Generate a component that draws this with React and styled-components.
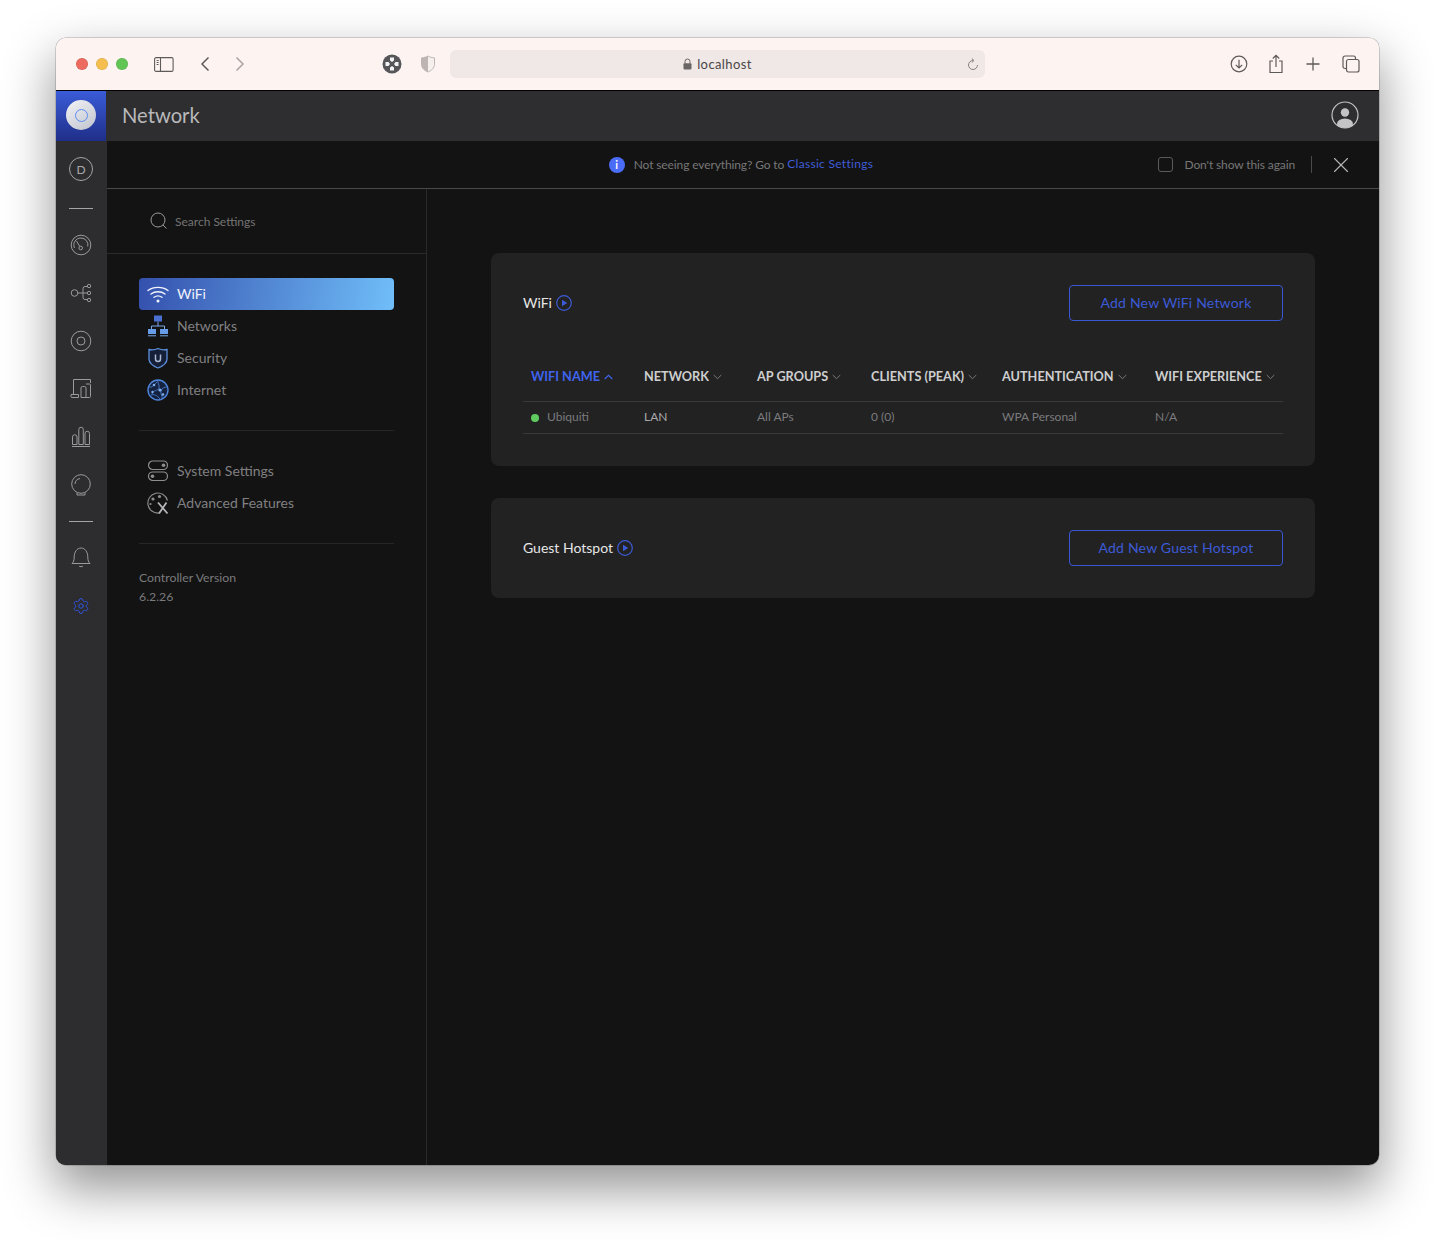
import React from "react";
import styled, { createGlobalStyle } from "styled-components";
import { Settings, X } from "lucide-react";

const Global = createGlobalStyle`
  html, body { margin: 0; padding: 0; background: #fff; height: 1240px; overflow: hidden; }
  body { font-family: Lato, "Liberation Sans", sans-serif; -webkit-font-smoothing: antialiased; }
  * { box-sizing: border-box; }
`;

const Page = styled.div`
  height: 1240px;
  padding: 38px 56px 75px;
`;
const Win = styled.div`
  height: 1127px;
  border-radius: 10px;
  overflow: hidden;
  display: flex;
  flex-direction: column;
  box-shadow: 0 0 0 0.5px rgba(0,0,0,.3), 0 22px 50px 2px rgba(0,0,0,.42);
`;
const TitleBar = styled.div`
  height: 53px;
  flex: none;
  background: #fdf3f1;
  border-bottom: 1px solid #000;
  display: flex;
  align-items: center;
  padding-left: 20px;
`;
const Lights = styled.div`
  display: flex;
  gap: 8px;
  width: 52px;
`;
const Light = styled.span`
  width: 12px;
  height: 12px;
  border-radius: 50%;
  background: ${p => p.$c};
  box-shadow: inset 0 0 0 0.5px rgba(0,0,0,.12);
`;
const Tool = styled.div`
  width: 20px;
  height: 22px;
  margin-left: ${p => p.$ml}px;
  flex: none;
  display: flex;
  align-items: center;
  justify-content: center;
  color: ${p => p.$c || "#5f5a5a"};
`;
const UrlBar = styled.div`
  width: 535px;
  height: 28px;
  margin-left: 12px;
  flex: none;
  border-radius: 6px;
  background: #efe8e6;
  display: flex;
  align-items: center;
  justify-content: center;
  position: relative;
  gap: 5px;
  font-size: 13px;
  color: #4a4646;
  letter-spacing: .4px;
`;
const Reload = styled.span`
  position: absolute;
  right: 6px;
  top: 8px;
  display: flex;
`;
const Header = styled.div`
  height: 50px;
  flex: none;
  background: #2e2e30;
  display: flex;
  align-items: center;
  justify-content: space-between;
  padding-right: 20px;
`;
const Brand = styled.div`
  display: flex;
  align-items: center;
`;
const LogoBox = styled.div`
  width: 50px;
  height: 50px;
  padding-bottom: 2px;
  background: linear-gradient(180deg,#3a5cd8,#1f2e88);
  display: flex;
  align-items: center;
  justify-content: center;
`;
const Disc = styled.div`
  width: 30px;
  height: 30px;
  border-radius: 50%;
  background: linear-gradient(145deg,#f2f3f6,#bfc3cc);
  display: flex;
  align-items: center;
  justify-content: center;
`;
const Ring = styled.div`
  width: 13px;
  height: 13px;
  border-radius: 50%;
  border: 1.5px solid #5c8cf5;
`;
const AppName = styled.div`
  margin-left: 16px;
  padding-bottom: 3px;
  font-size: 20.2px;
  color: #b9b9bb;
`;
const Avatar = styled.div`
  display: flex;
  padding-bottom: 2px;
`;
const Body = styled.div`
  flex: 1;
  min-height: 0;
  display: flex;
  background: #131313;
`;
const Rail = styled.nav`
  width: 51px;
  flex: none;
  background: #2d2d2f;
  padding: 4px 1px 0 0;
  display: flex;
  flex-direction: column;
`;
const RailItem = styled.div`
  height: 48px;
  display: flex;
  align-items: center;
  justify-content: center;
  color: ${p => p.$c || "#9a9a9c"};
`;
const DBadge = styled.div`
  width: 24px;
  height: 24px;
  border: 1px solid #a5a5a7;
  border-radius: 50%;
  font-size: 12px;
  color: #a8a8aa;
  display: flex;
  align-items: center;
  justify-content: center;
`;
const RailRule = styled.div`
  height: ${p => p.$h}px;
  padding-top: ${p => p.$pt || 0}px;
  display: flex;
  align-items: center;
  justify-content: center;
  &::before {
    content: "";
    width: 24px;
    height: 1px;
    background: #a5a5a7;
  }
`;
const Main = styled.div`
  flex: 1;
  min-width: 0;
  display: flex;
  flex-direction: column;
`;
const Banner = styled.div`
  height: 48px;
  flex: none;
  border-bottom: 1px solid #4a4a4c;
  display: grid;
  grid-template-columns: 1fr auto 1fr;
  align-items: center;
  padding: 0 25px 0 21px;
  font-size: 12px;
  letter-spacing: -.12px;
  color: #777;
`;
const Notice = styled.div`
  grid-column: 2;
  display: flex;
  align-items: center;
`;
const InfoDot = styled.span`
  width: 16px;
  height: 16px;
  border-radius: 50%;
  background: #4a6cf7;
  color: #fff;
  font-size: 11px;
  font-weight: 700;
  letter-spacing: 0;
  display: flex;
  align-items: center;
  justify-content: center;
  margin-right: 9px;
`;
const BannerText = styled.span`
  padding-bottom: 1px;
`;
const BLink = styled.span`
  color: #3f5dd8;
  margin-left: 3px;
  padding-bottom: 3px;
  letter-spacing: .3px;
`;
const BannerRight = styled.div`
  grid-column: 3;
  justify-self: end;
  display: flex;
  align-items: center;
`;
const Check = styled.span`
  width: 15px;
  height: 15px;
  border: 1px solid #5a5a5c;
  border-radius: 3px;
  margin-right: 12px;
`;
const VRule = styled.span`
  width: 1px;
  height: 17px;
  background: #4a4a4c;
  margin: 0 16px;
`;
const CloseBtn = styled.span`
  display: flex;
  color: #b5b5b7;
`;
const Split = styled.div`
  flex: 1;
  min-height: 0;
  display: flex;
`;
const SidePanel = styled.aside`
  width: 320px;
  flex: none;
  border-right: 1px solid #2a2a2b;
`;
const SearchRow = styled.div`
  height: 65px;
  border-bottom: 1px solid #2a2a2b;
  padding: 0 0 1px 43px;
  display: flex;
  align-items: center;
  gap: 7px;
  font-size: 12px;
  color: #737375;
`;
const SearchText = styled.span`
  padding-top: 2px;
`;
const NavArea = styled.div`
  padding: 24px 32px;
`;
const NavItem = styled.div`
  height: 32px;
  border-radius: 4px;
  display: flex;
  align-items: center;
  gap: 7px;
  padding-left: 7px;
  font-size: 14px;
  color: ${p => (p.$active ? "#eef2fb" : "#808082")};
  background: ${p => (p.$active ? "linear-gradient(100deg,#3450ad,#70bef9)" : "transparent")};
`;
const NavLabel = styled.span`
  padding-bottom: 2px;
`;
const NavRule = styled.div`
  height: 1px;
  background: #262627;
  margin: ${p => p.$m};
`;
const Version = styled.div`
  font-size: 12.3px;
  line-height: 19px;
  color: #7a7a7c;
  margin-top: 24px;
`;
const Content = styled.main`
  flex: 1;
  padding: 64px;
  display: flex;
  flex-direction: column;
  gap: 32px;
`;
const Card = styled.section`
  background: #222223;
  border-radius: 8px;
  padding: 32px;
`;
const CardHead = styled.div`
  display: flex;
  align-items: center;
  justify-content: space-between;
`;
const CardTitle = styled.div`
  display: flex;
  align-items: center;
  gap: 4px;
  font-size: 14px;
  color: #e6e6e6;
`;
const TitleText = styled.span`
  padding-bottom: 2px;
`;
const OutlineBtn = styled.div`
  width: 214px;
  height: 36px;
  padding-bottom: 2px;
  border: 1px solid #3a58d4;
  border-radius: 4px;
  color: #3c5ad6;
  font-size: 14px;
  letter-spacing: .2px;
  display: flex;
  align-items: center;
  justify-content: center;
`;
const Row = styled.div`
  display: grid;
  grid-template-columns: 113px 113px 114px 131px 153px 136px;
  height: ${p => p.$h}px;
  align-items: center;
  border-bottom: 1px solid #39393a;
  margin-top: ${p => p.$mt || 0}px;
`;
const HeadCell = styled.div`
  padding: 0 0 2px 8px;
  font-size: 12.7px;
  font-weight: 700;
  color: ${p => (p.$active ? "#3f64ee" : "#cfcfcf")};
  display: flex;
  align-items: center;
  gap: 4px;
  white-space: nowrap;
`;
const Caret = styled.span`
  display: flex;
  padding-top: 2px;
`;
const Cell = styled.div`
  padding: 0 0 2px 8px;
  font-size: 12px;
  color: ${p => (p.$strong ? "#a9a9ab" : "#7b7b7d")};
  display: flex;
  align-items: center;
  gap: 8px;
`;
const Dot = styled.span`
  width: 8px;
  height: 8px;
  margin-top: 2px;
  border-radius: 50%;
  background: #5fcb5f;
`;

const S = { fill: "none", stroke: "currentColor", strokeWidth: 1 };

const IconSidebar = () => (
  <svg width="20" height="15" viewBox="0 0 20 15" {...S} strokeWidth="1.1">
    <rect x=".6" y=".6" width="18.5" height="13.8" rx="1.5" />
    <path d="M6.5.6v13.8M2.6 3.5h2M2.6 5.5h2M2.6 7.5h2" />
  </svg>
);
const Chev = ({ d }) => (
  <svg width="12" height="16" viewBox="0 0 12 16" fill="none" stroke="currentColor" strokeWidth="1.5">
    <path d={d} />
  </svg>
);
const IconGhost = () => (
  <svg width="20" height="20" viewBox="0 0 20 20">
    <circle cx="10" cy="10" r="9.5" fill="#565658" />
    <path d="M8 3.5h4v3L10 8 8 6.5zM8 16.5h4v-3L10 12l-2 1.5zM3.5 8h3L8 10l-1.5 2h-3zM16.5 8h-3L12 10l1.5 2h3z" fill="#f4f4f4" />
  </svg>
);
const IconShield = () => (
  <svg width="16" height="18" viewBox="0 0 16 18">
    <path d="M8 1c2 1.200 4 1.700 6.500 1.900v6.300C14.500 13 11.500 15.500 8 17c-3.500-1.500-6.500-4-6.500-7.800V2.900C4 2.700 6 2.200 8 1z" fill="#f5efee" stroke="#bdb5b4" />
    <path d="M8 1c-2 1.200-4 1.700-6.500 1.900v6.300C1.500 13 4.500 15.500 8 17z" fill="#bdb5b4" />
  </svg>
);
const IconLock = () => (
  <svg width="9" height="12" viewBox="0 0 9 12">
    <path d="M2 5.500V3.500a2.500 2.500 0 0 1 5 0v2" fill="none" stroke="#6a6666" strokeWidth="1" />
    <rect x=".5" y="5.200" width="8" height="6.300" rx="1" fill="#6a6666" />
  </svg>
);
const IconReload = () => (
  <svg width="12" height="13" viewBox="0 0 12 13" fill="none" stroke="#85807f" strokeWidth="1">
    <path d="M6 2.500a4.500 4.500 0 1 0 4.500 4.500" />
    <path d="M4.800 .5 7 2.500 4.800 4.500" />
  </svg>
);
const IconDownload = () => (
  <svg width="18" height="18" viewBox="0 0 18 18" {...S} strokeWidth="1.200">
    <circle cx="9" cy="9" r="7.800" />
    <path d="M9 4.800v8M5.800 9.800 9 13l3.200-3.200" />
  </svg>
);
const IconShare = () => (
  <svg width="16" height="20" viewBox="0 0 16 20" {...S} strokeWidth="1.200">
    <path d="M5 7H2v11.500h12V7h-3M8 13V1.500M4.800 4.500 8 1.300l3.200 3.200" />
  </svg>
);
const IconPlus = () => (
  <svg width="14" height="14" viewBox="0 0 14 14" {...S} strokeWidth="1.300">
    <path d="M7 .5v13M.5 7h13" />
  </svg>
);
const IconTabs = () => (
  <svg width="18" height="18" viewBox="0 0 18 18" {...S} strokeWidth="1.200">
    <rect x="4.500" y="4.500" width="12.500" height="12.500" rx="2" />
    <path d="M4 13.500H3a2 2 0 0 1-2-2V3a2 2 0 0 1 2-2h8.500a2 2 0 0 1 2 2v1" />
  </svg>
);
const IconUser = () => (
  <svg width="28" height="28" viewBox="0 0 28 28">
    <defs>
      <clipPath id="uc"><circle cx="14" cy="14" r="13" /></clipPath>
    </defs>
    <circle cx="14" cy="14" r="13" fill="none" stroke="#c4c4c6" strokeWidth="1.200" />
    <g clipPath="url(#uc)" fill="#c4c4c6">
      <circle cx="14" cy="11.500" r="4.200" />
      <ellipse cx="14" cy="23" rx="8" ry="5.500" />
    </g>
  </svg>
);
const Gauge = () => (
  <svg width="24" height="24" viewBox="0 0 24 24" {...S}>
    <circle cx="12" cy="12" r="9.800" />
    <path d="M5.500 15a7 7 0 0 1 6.500-10 7 7 0 0 1 6.800 8.500" />
    <circle cx="11.700" cy="15" r="1.800" />
    <path d="M10.800 13.500 7.500 8" />
  </svg>
);
const Topo = () => (
  <svg width="24" height="24" viewBox="0 0 24 24" {...S}>
    <circle cx="5.500" cy="12" r="3.300" />
    <path d="M8.800 12H18M14 12V7.500a2 2 0 0 1 2-2h2M14 12v4.500a2 2 0 0 0 2 2h2" />
    <circle cx="20" cy="5" r="1.700" />
    <circle cx="20" cy="12" r="1.700" />
    <circle cx="20" cy="19" r="1.700" />
  </svg>
);
const Target = () => (
  <svg width="24" height="24" viewBox="0 0 24 24" {...S}>
    <circle cx="12" cy="12" r="9.800" />
    <circle cx="12" cy="12" r="4" />
  </svg>
);
const Devices = () => (
  <svg width="24" height="24" viewBox="0 0 24 24" {...S}>
    <path d="M4.500 17V2.500h17V6" />
    <path d="M2 17.500h7.500v3H3a1 1 0 0 1-1-1zM12 20.500V11a1.500 1.500 0 0 1 1.500-1.500h2A1.500 1.500 0 0 1 17 11v9.500z" />
    <path d="M17 7h3.500a1 1 0 0 1 1 1v11.500a1 1 0 0 1-1 1H12" />
  </svg>
);
const Bars = () => (
  <svg width="24" height="24" viewBox="0 0 24 24" {...S}>
    <path d="M3 21.500h18" />
    <path d="M3.500 19.500V12a2.200 2.200 0 0 1 4.500 0v7.500zM9.800 19.500V4.500a2.200 2.200 0 0 1 4.500 0v15zM16 19.500V8.500a2.200 2.200 0 0 1 4.500 0v11z" />
  </svg>
);
const Orb = () => (
  <svg width="24" height="24" viewBox="0 0 24 24" {...S}>
    <circle cx="12" cy="11" r="9.300" />
    <path d="M6 11a6 6 0 0 1 5-5.500" />
    <path d="M8 19.500V22h8v-2.500" />
  </svg>
);
const Bell = () => (
  <svg width="24" height="24" viewBox="0 0 24 24" {...S}>
    <path d="M3 17.500c1.500-1.500 2.200-3 2.200-6.500 0-5 2.800-9 6.800-9s6.800 4 6.800 9c0 3.500.7 5 2.200 6.500z" />
    <path d="M10 20c1 .9 3 .9 4 0" />
  </svg>
);
const Search = () => (
  <svg width="18" height="18" viewBox="0 0 18 18" fill="none" stroke="#9a9a9c" strokeWidth="1">
    <circle cx="8" cy="8" r="7" />
    <path d="m13 13 3.500 3.500" />
  </svg>
);
const NavWifi = () => (
  <svg width="24" height="24" viewBox="0 0 24 24" fill="none" stroke="#f2f5fc" strokeWidth="1.400" strokeLinecap="round">
    <path d="M2 8.500c5.500-4.200 14.500-4.200 20 0M5 12c3.800-3 10.200-3 14 0M8 15.300c2.300-1.600 5.700-1.600 8 0" />
    <circle cx="12" cy="19" r="1.500" fill="#f2f5fc" stroke="none" />
  </svg>
);
const NavNet = () => (
  <svg width="24" height="24" viewBox="0 0 24 24">
    <rect x="8" y="1.500" width="8" height="6" fill="#4a70d2" />
    <path d="M12 7.500V12M5.500 15v-3h13v3" stroke="#7aa7e6" fill="none" />
    <rect x="2" y="15" width="8" height="5" fill="#669ce8" />
    <rect x="14" y="15" width="8" height="5" fill="#669ce8" />
    <path d="M2 21.800h8M14 21.800h8" stroke="#7aa7e6" strokeWidth="1" />
  </svg>
);
const NavShield = () => (
  <svg width="24" height="24" viewBox="0 0 24 24">
    <path d="M3 3.500c3 .6 6 .4 9-1 3 1.400 6 1.600 9 1v9.500c0 4-4 7-9 9-5-2-9-5-9-9z" fill="#152038" stroke="#5c8fdc" strokeWidth="1.300" />
    <path d="M9.500 8.500v4.500a2.500 2.500 0 0 0 5 0V8.500" fill="none" stroke="#a9b8d4" strokeWidth="1.500" />
  </svg>
);
const NavGlobe = () => (
  <svg width="24" height="24" viewBox="0 0 24 24" fill="none" stroke="#4f86dc">
    <circle cx="12" cy="12" r="10" strokeWidth="1.400" fill="#14223f" />
    <path d="M3 9c3 1 5-2 8-5M12 2c-1 3 2 5 1 8s-6 2-7 6M21 9c-3 0-5 1-6 4s2 5 1 8M5 17c3-1 6 0 9 4" strokeWidth=".8" />
    <g fill="#7fb0ee" stroke="none">
      <circle cx="8" cy="7" r="1.300" />
      <circle cx="14" cy="12" r="1.600" />
      <circle cx="17" cy="16.500" r="1.300" />
      <circle cx="6.500" cy="14" r="1.200" />
    </g>
  </svg>
);
const NavToggles = () => (
  <svg width="24" height="24" viewBox="0 0 24 24" fill="none" stroke="#8e8e90" strokeWidth="1.200">
    <rect x="2.500" y="2" width="19" height="8.500" rx="4.200" />
    <rect x="2.500" y="13" width="19" height="8.500" rx="4.200" />
    <circle cx="17.500" cy="6.200" r="1.800" fill="#8e8e90" stroke="none" />
    <circle cx="6.500" cy="17.200" r="1.800" fill="#8e8e90" stroke="none" />
  </svg>
);
const NavAdv = () => (
  <svg width="24" height="24" viewBox="0 0 24 24" fill="none" stroke="#8e8e90">
    <path d="M13 22a10 10 0 1 1 8.500-12.500" strokeWidth="1.100" />
    <circle cx="7" cy="8" r="1.600" fill="#8e8e90" stroke="none" />
    <circle cx="13.500" cy="5.500" r="1.600" fill="#8e8e90" stroke="none" />
    <circle cx="4.500" cy="13" r="1.100" fill="#8e8e90" stroke="none" />
    <path d="M12 11.500 21.500 22.500M20.500 11.500 13 22.500" stroke="#b5b5b7" strokeWidth="1.800" />
  </svg>
);
const Play = () => (
  <svg width="16" height="16" viewBox="0 0 16 16">
    <circle cx="8" cy="8" r="7.300" fill="none" stroke="#3c5ad6" strokeWidth="1.200" />
    <path d="M6 4.800v6.400L11.300 8z" fill="#3c5ad6" />
  </svg>
);
const SortDown = () => (
  <svg width="9" height="6" viewBox="0 0 9 6" fill="none" stroke="#7a7a7c" strokeWidth="1">
    <path d="m.7 1 3.800 3.700L8.300 1" />
  </svg>
);
const SortUp = () => (
  <svg width="9" height="6" viewBox="0 0 9 6" fill="none" stroke="#3f64ee" strokeWidth="1.200">
    <path d="m.7 5 3.800-3.700L8.300 5" />
  </svg>
);

const heads = ["WIFI NAME", "NETWORK", "AP GROUPS", "CLIENTS (PEAK)", "AUTHENTICATION", "WIFI EXPERIENCE"];

export default function App() {
  return (
    <Page>
      <Global />
      <Win>
        <TitleBar>
          <Lights>
            <Light $c="#ec6a5e" />
            <Light $c="#f4bf4f" />
            <Light $c="#61c554" />
          </Lights>
          <Tool $ml={26}><IconSidebar /></Tool>
          <Tool $ml={21}><Chev d="M9.500 1.500 3 8l6.500 6.500" /></Tool>
          <Tool $ml={15} $c="#a9a4a3"><Chev d="M2.500 1.500 9 8l-6.500 6.500" /></Tool>
          <Tool $ml={132}><IconGhost /></Tool>
          <Tool $ml={16}><IconShield /></Tool>
          <UrlBar>
            <IconLock />
            <span>localhost</span>
            <Reload><IconReload /></Reload>
          </UrlBar>
          <Tool $ml={244}><IconDownload /></Tool>
          <Tool $ml={17}><IconShare /></Tool>
          <Tool $ml={17}><IconPlus /></Tool>
          <Tool $ml={18}><IconTabs /></Tool>
        </TitleBar>
        <Header>
          <Brand>
            <LogoBox>
              <Disc><Ring /></Disc>
            </LogoBox>
            <AppName>Network</AppName>
          </Brand>
          <Avatar><IconUser /></Avatar>
        </Header>
        <Body>
          <Rail>
            <RailItem><DBadge>D</DBadge></RailItem>
            <RailRule $h={28} $pt={2} />
            <RailItem><Gauge /></RailItem>
            <RailItem><Topo /></RailItem>
            <RailItem><Target /></RailItem>
            <RailItem><Devices /></RailItem>
            <RailItem><Bars /></RailItem>
            <RailItem><Orb /></RailItem>
            <RailRule $h={25} />
            <RailItem><Bell /></RailItem>
            <RailItem $c="#2f55e0"><Settings size={18} strokeWidth={1.3} /></RailItem>
          </Rail>
          <Main>
            <Banner>
              <Notice>
                <InfoDot>i</InfoDot>
                <BannerText>Not seeing everything? Go to</BannerText>
                <BLink>Classic Settings</BLink>
              </Notice>
              <BannerRight>
                <Check />
                <BannerText>Don't show this again</BannerText>
                <VRule />
                <CloseBtn><X size={26} strokeWidth={1} /></CloseBtn>
              </BannerRight>
            </Banner>
            <Split>
              <SidePanel>
                <SearchRow>
                  <Search />
                  <SearchText>Search Settings</SearchText>
                </SearchRow>
                <NavArea>
                  <NavItem $active><NavWifi /><NavLabel>WiFi</NavLabel></NavItem>
                  <NavItem><NavNet /><NavLabel>Networks</NavLabel></NavItem>
                  <NavItem><NavShield /><NavLabel>Security</NavLabel></NavItem>
                  <NavItem><NavGlobe /><NavLabel>Internet</NavLabel></NavItem>
                  <NavRule $m="24px 0" />
                  <NavItem><NavToggles /><NavLabel>System Settings</NavLabel></NavItem>
                  <NavItem><NavAdv /><NavLabel>Advanced Features</NavLabel></NavItem>
                  <NavRule $m="24px 0 0" />
                  <Version>Controller Version<br />6.2.26</Version>
                </NavArea>
              </SidePanel>
              <Content>
                <Card>
                  <CardHead>
                    <CardTitle><TitleText>WiFi</TitleText><Play /></CardTitle>
                    <OutlineBtn>Add New WiFi Network</OutlineBtn>
                  </CardHead>
                  <Row $h={49} $mt={32}>
                    {heads.map((h, i) => (
                      <HeadCell key={h} $active={i === 0}>
                        {h}
                        <Caret>{i === 0 ? <SortUp /> : <SortDown />}</Caret>
                      </HeadCell>
                    ))}
                  </Row>
                  <Row $h={32}>
                    <Cell><Dot />Ubiquiti</Cell>
                    <Cell $strong>LAN</Cell>
                    <Cell>All APs</Cell>
                    <Cell>0 (0)</Cell>
                    <Cell>WPA Personal</Cell>
                    <Cell>N/A</Cell>
                  </Row>
                </Card>
                <Card>
                  <CardHead>
                    <CardTitle><TitleText>Guest Hotspot</TitleText><Play /></CardTitle>
                    <OutlineBtn>Add New Guest Hotspot</OutlineBtn>
                  </CardHead>
                </Card>
              </Content>
            </Split>
          </Main>
        </Body>
      </Win>
    </Page>
  );
}
